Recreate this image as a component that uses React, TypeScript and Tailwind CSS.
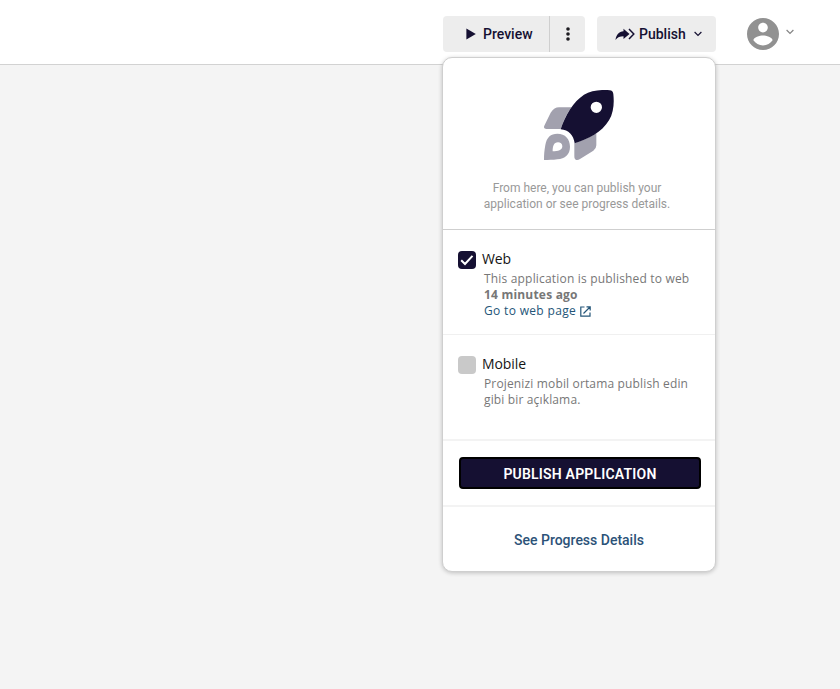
import React from "react";

const body = "font-['Open_Sans','Noto_Sans',sans-serif]";

function Rocket() {
  return (
    <svg width="70" height="70" viewBox="42 30 210 210" className="block">
      <path d="M62 98Q73 82 87 82H124Q104 110 92 147H49Q38 146 44 135Z" fill="#a2a1ae" />
      <path d="M133 190Q169 179 199 160V196Q199 206 190 212L150 237Q133 246 133 229Z" fill="#a2a1ae" />
      <path
        d="M42 240C42 225 43 211 46 195C50 172 62 161 82 161C106 161 120 177 120 200C120 224 105 236 82 238C68 240 55 240 42 240ZM68 214C84 214 97 211 97 199C97 191 91 187 84 187C71 187 68 200 68 214Z"
        fill="#a2a1ae"
        fillRule="evenodd"
      />
      <path
        d="M92 148C106 105 130 65 162 44C183 31 214 28 239 31Q249 32 250 42C253 69 251 98 237 121C215 158 175 177 134 190C131 166 116 150 92 148ZM199 65A17 17 0 1 0 199 99A17 17 0 1 0 199 65Z"
        fill="#151032"
        fillRule="evenodd"
      />
    </svg>
  );
}

function Chevron({ className }: { className: string }) {
  return (
    <svg width="8" height="6" viewBox="0 0 8 6" fill="none" stroke="currentColor" strokeWidth="1.2" className={className}>
      <path d="M0.6 1L4 4.4L7.4 1" />
    </svg>
  );
}

function Header() {
  return (
    <header className="flex h-[65px] items-start border-b border-[#d2d2d2] bg-white pl-[443px] pt-4 text-sm font-medium text-[#151032]">
      <div className="flex h-9 w-[142px] overflow-hidden rounded bg-[#ededed]">
        <button className="flex w-[107px] items-center border-r border-[#cfcfcf] pl-[23px]">
          <svg width="10" height="12" viewBox="0 0 10 12" fill="currentColor">
            <path d="M0.4 0.5L9.8 6L0.4 11.5Z" />
          </svg>
          <span className="ml-[7px]">Preview</span>
        </button>
        <button className="flex flex-1 items-center justify-center" aria-label="More">
          <svg width="4" height="14" viewBox="0 0 4 14" fill="#1c1b20">
            <circle cx="2" cy="2" r="1.8" />
            <circle cx="2" cy="7" r="1.8" />
            <circle cx="2" cy="12" r="1.8" />
          </svg>
        </button>
      </div>
      <button className="ml-3 flex h-9 w-[119px] items-center rounded bg-[#ededed] pl-[18px]">
        <svg width="20" height="13" viewBox="0 0 20 13" fill="none">
          <path d="M0.5 12C1.2 6.8 4 3.8 8.5 3.3V0.8L14.5 6L8.5 11V8.2C5 8.2 2.5 9.2 0.5 12Z" fill="#151032" />
          <path d="M14 1.1L18.8 6L14 10.9" stroke="#151032" strokeWidth="1.5" />
        </svg>
        <span className="ml-1">Publish</span>
        <Chevron className="ml-2" />
      </button>
      <div className="ml-[31px] mt-0.5 flex items-start">
        <svg width="32" height="32" viewBox="2 2 20 20" fill="#919191">
          <path d="M12 2C6.48 2 2 6.48 2 12s4.48 10 10 10 10-4.48 10-10S17.52 2 12 2zm0 3c1.66 0 3 1.34 3 3s-1.34 3-3 3-3-1.34-3-3 1.34-3 3-3zm0 14.2c-2.5 0-4.71-1.28-6-3.22.03-1.99 4-3.08 6-3.08 1.99 0 5.97 1.09 6 3.08-1.29 1.94-3.5 3.22-6 3.22z" />
        </svg>
        <Chevron className="ml-[7px] mt-[11px] text-[#858585]" />
      </div>
    </header>
  );
}

function PublishMenu() {
  return (
    <section className="absolute left-[442px] top-[57px] flex h-[515px] w-[274px] flex-col rounded-[10px] border border-[#cfcfcf] bg-white shadow-[0_1px_4px_rgba(0,0,0,0.22)]">
      <div className="flex h-[172px] flex-col items-center border-b border-[#cfcfcf] pt-8">
        <Rocket />
        <p className="mt-5 mr-1 text-center text-xs leading-4 text-[#999]">
          From here, you can publish your
          <br />
          application or see progress details.
        </p>
      </div>
      <div className="flex h-[105px] border-b border-[#f0f0f0] pl-[15px] pt-[21px]">
        <div className="flex h-[18px] w-[18px] shrink-0 items-center justify-center rounded bg-[#151032]">
          <svg width="14" height="12" viewBox="0 0 14 12" fill="none" stroke="white" strokeWidth="2">
            <path d="M1.2 6.2L5 10L12.5 1.8" />
          </svg>
        </div>
        <div className={`${body} ml-1.5 whitespace-nowrap text-xs leading-4 text-[#777]`}>
          <h2 className="-mt-px pb-[3px] text-sm font-medium leading-[18px] tracking-[-0.1px] text-[#151515]">Web</h2>
          <div className="ml-0.5">
            <p className="tracking-[0.18px]">This application is published to web</p>
            <p className="font-bold tracking-[0.2px]">14 minutes ago</p>
            <a className="flex items-center text-[#245578]">
              <span className="tracking-[0.33px]">Go to web page</span>
              <svg width="11" height="11" viewBox="0 0 11 11" fill="none" stroke="currentColor" strokeWidth="1.2" className="ml-1">
                <path d="M4.5 1H0.8V10.2H10V6.5M6.5 0.8H10.2V4.5M10 1L3.5 7.5" />
              </svg>
            </a>
          </div>
        </div>
      </div>
      <div className="flex h-[106px] border-b-2 border-[#f3f3f3] pl-[15px] pt-[21px]">
        <div className="h-[18px] w-[18px] shrink-0 rounded bg-[#c9c9c9]" />
        <div className={`${body} ml-1.5 whitespace-nowrap text-xs leading-4 text-[#777]`}>
          <h2 className="-mt-px pb-[3px] text-sm font-medium leading-[18px] tracking-[-0.1px] text-[#151515]">Mobile</h2>
          <p className="ml-0.5 tracking-[0.15px]">
            Projenizi mobil ortama publish edin
            <br />
            gibi bir açıklama.
          </p>
        </div>
      </div>
      <div className="h-[66px] border-b-2 border-[#f3f3f3] pl-4 pt-4">
        <button className="flex h-8 w-[242px] items-center justify-center rounded border-2 border-black bg-[#151032] pt-0.5 text-sm font-semibold tracking-[0.2px] text-white">
          PUBLISH APPLICATION
        </button>
      </div>
      <a className="flex flex-1 items-center justify-center pt-0.5 text-sm font-medium text-[#2c5278]">See Progress Details</a>
    </section>
  );
}

export default function App() {
  return (
    <main className="relative h-[689px] w-[840px] overflow-hidden bg-[#f4f4f4] font-['Roboto',sans-serif]">
      <Header />
      <PublishMenu />
    </main>
  );
}
